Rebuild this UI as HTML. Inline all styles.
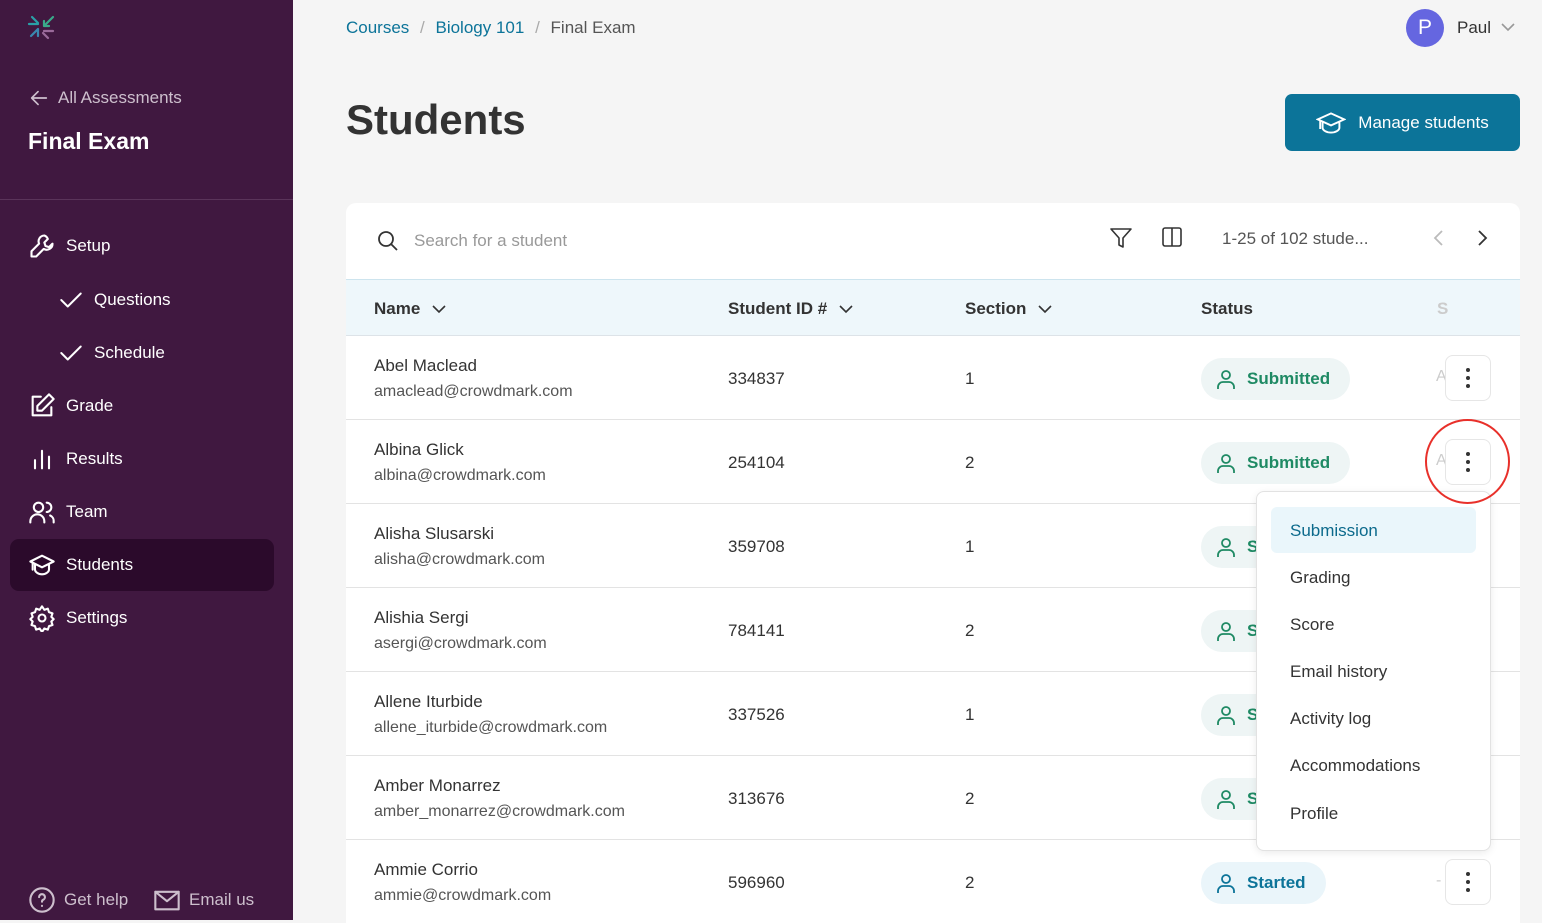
<!DOCTYPE html>
<html><head><meta charset="utf-8"><style>
*{box-sizing:border-box;margin:0;padding:0}
body{width:1542px;height:920px;overflow:hidden;background:#f5f5f5;font-family:"Liberation Sans",sans-serif;position:relative;color:#333}
.sb{position:absolute;left:0;top:0;width:293px;height:920px;background:#401840;color:#fff}
.abs{position:absolute}
.nav{position:absolute;left:28px;font-size:17px;color:#fff;display:flex;align-items:center;gap:10px}
.nav svg{width:28px;height:28px;fill:none;stroke:#fff;stroke-width:1.8;stroke-linecap:round;stroke-linejoin:round}
.card{position:absolute;left:346px;top:203px;width:1174px;height:720px;background:#fff;border-radius:10px 10px 0 0;overflow:hidden}
.hdr{position:absolute;left:0;top:76px;width:100%;height:57px;background:#eef7fb;border-top:1px solid #cde4ee;border-bottom:1px solid #dde3e8;font-weight:bold;font-size:17px;color:#333}
.row{position:absolute;left:0;width:100%;height:84px;border-bottom:1px solid #e3e3e3}
.nm{position:absolute;left:28px;top:20px;font-size:17px;color:#333}
.em{position:absolute;left:28px;top:47px;font-size:16px;color:#555}
.id{position:absolute;left:382px;top:33px;font-size:17px}
.sec{position:absolute;left:619px;top:33px;font-size:17px}
.pill{position:absolute;left:855px;top:22px;height:42px;border-radius:21px;background:#eef5f5;color:#1f8a64;font-weight:bold;font-size:17px;display:flex;align-items:center;padding:0 20px 0 14px;gap:10px}
.pill svg{width:22px;height:22px;fill:none;stroke:#1f8a64;stroke-width:1.8}
.kb{position:absolute;left:1099px;top:19px;width:46px;height:46px;border:1px solid #e6e6e6;border-radius:8px;background:#fff;display:flex;flex-direction:column;align-items:center;justify-content:center;gap:4px}
.kb i{width:4px;height:4px;border-radius:50%;background:#333;display:block}
.menu{position:absolute;left:1256px;top:491px;width:235px;height:360px;background:#fff;border:1px solid #e2e2e2;border-radius:8px;box-shadow:0 2px 8px rgba(0,0,0,.08)}
.mi{position:absolute;left:33px;font-size:17px;color:#333}
</style></head><body>
<div class="sb">
<svg class="abs" style="left:26px;top:12px" width="32" height="32" viewBox="0 0 32 32" fill="none" stroke-width="2.2" stroke-linecap="round"><path d="M18 14l9-9M18 14v-5M18 14h5" stroke="#3aaa8a"/><path d="M3 12h9M6 5l6 6" stroke="#2aa0a8"/><path d="M12 17l-7 7M12 17v7" stroke="#3a88b0"/><path d="M18 19h9M17 21l5 5" stroke="#9a6a9a"/></svg>
<div class="nav" style="top:87px;color:#cdbfcd;gap:8px"><svg viewBox="0 0 24 24" style="width:22px;height:22px;stroke:#cdbfcd"><path d="M20 12H4M11 5l-7 7 7 7"/></svg>All Assessments</div>
<div class="abs" style="left:28px;top:128px;font-size:23px;font-weight:bold">Final Exam</div>
<div class="abs" style="left:0;top:199px;width:293px;height:1px;background:#5a345a"></div>
<div class="nav" style="top:232px"><svg viewBox="0 0 24 24"><path d="M14 3a5 5 0 0 0-4.5 7L3 16.5 3 21h4l6.5-6.5A5 5 0 0 0 21 10l-3 3-3-1-1-3 3-3a5 5 0 0 0-3-3z"/></svg>Setup</div>
<div class="nav" style="top:286px;left:58px"><svg viewBox="0 0 24 24" style="width:26px"><path d="M3 12l6 6L21 6"/></svg>Questions</div>
<div class="nav" style="top:339px;left:58px"><svg viewBox="0 0 24 24" style="width:26px"><path d="M3 12l6 6L21 6"/></svg>Schedule</div>
<div class="nav" style="top:392px"><svg viewBox="0 0 24 24"><path d="M11 4H4v16h16v-7M18 2l4 4-10 10H8v-4z"/></svg>Grade</div>
<div class="nav" style="top:445px"><svg viewBox="0 0 24 24"><path d="M6 20v-7M12 20V5M18 20v-10"/></svg>Results</div>
<div class="nav" style="top:498px"><svg viewBox="0 0 24 24"><circle cx="9" cy="8" r="4"/><path d="M2 21v-1a6 6 0 0 1 12 0v1M16 4a4 4 0 0 1 0 8M19 15a5 5 0 0 1 3 5v1"/></svg>Team</div>
<div class="abs" style="left:10px;top:539px;width:264px;height:52px;background:#2b0a2b;border-radius:9px"></div>
<div class="nav" style="top:551px"><svg viewBox="0 0 24 24"><path d="M2 9l10-5 10 5-10 5zM6 11v5c0 2 3 4 6 4s6-2 6-4v-5M4 10v6"/></svg>Students</div>
<div class="nav" style="top:604px"><svg viewBox="0 0 24 24"><circle cx="12" cy="12" r="3"/><path d="M12 2l2 3 3-1 1 3 3 1-1 3 2 2-2 2 1 3-3 1-1 3-3-1-2 3-2-3-3 1-1-3-3-1 1-3-2-2 2-2-1-3 3-1 1-3 3 1z"/></svg>Settings</div>
<div class="nav" style="top:886px;color:#cdbfcd;gap:8px"><svg viewBox="0 0 24 24" style="stroke:#cdbfcd"><circle cx="12" cy="12" r="10"/><path d="M9.5 9.5a2.5 2.5 0 1 1 3.5 2.3c-.7.3-1 .8-1 1.7M12 17v.1"/></svg>Get help</div>
<div class="nav" style="top:886px;left:153px;color:#cdbfcd;gap:8px"><svg viewBox="0 0 24 24" style="stroke:#cdbfcd"><rect x="2" y="5" width="20" height="15"/><path d="M2 5l10 8 10-8"/></svg>Email us</div>
</div>
<div class="abs" style="left:346px;top:18px;font-size:17px;color:#0c7499">Courses <span style="color:#aaa;margin:0 6px">/</span> Biology 101 <span style="color:#aaa;margin:0 6px">/</span> <span style="color:#555">Final Exam</span></div>
<div class="abs" style="left:1406px;top:9px;width:38px;height:38px;border-radius:50%;background:#6566e0;color:#fff;font-size:21px;text-align:center;line-height:38px">P</div>
<div class="abs" style="left:1457px;top:18px;font-size:17px;color:#333">Paul</div>
<svg class="abs" style="left:1500px;top:22px" width="16" height="10" viewBox="0 0 16 10" fill="none" stroke="#999" stroke-width="1.6"><path d="M2 2l6 6 6-6"/></svg>
<div class="abs" style="left:346px;top:96px;font-size:42px;font-weight:bold;color:#333">Students</div>
<div class="abs" style="left:1285px;top:94px;width:235px;height:57px;background:#0c7499;border-radius:7px;color:#fff;font-size:17px;display:flex;align-items:center;justify-content:center;gap:12px"><svg width="30" height="24" viewBox="0 0 24 20" fill="none" stroke="#fff" stroke-width="1.6"><path d="M1 7l11-5 11 5-11 5zM5 9v5c0 2 3 4 7 4s7-2 7-4V9M3 8v7"/></svg>Manage students</div>
<div class="card">
<svg class="abs" style="left:31px;top:27px" width="22" height="22" viewBox="0 0 22 22" fill="none" stroke="#333" stroke-width="1.8"><circle cx="9" cy="9" r="7"/><path d="M14 14l6 6"/></svg>
<div class="abs" style="left:68px;top:28px;font-size:17px;color:#999">Search for a student</div>
<svg class="abs" style="left:763px;top:24px" width="24" height="22" viewBox="0 0 24 22" fill="none" stroke="#333" stroke-width="1.6" stroke-linejoin="round"><path d="M2 2h20l-8 9v9l-4-2v-7z"/></svg>
<svg class="abs" style="left:815px;top:23px" width="22" height="22" viewBox="0 0 22 22" fill="none" stroke="#333" stroke-width="1.6"><rect x="2" y="2" width="18" height="18" rx="2"/><path d="M11 2v18"/></svg>
<div class="abs" style="left:876px;top:26px;font-size:17px;color:#555">1-25 of 102 stude...</div>
<svg class="abs" style="left:1086px;top:25px" width="14" height="20" viewBox="0 0 14 20" fill="none" stroke="#bbb" stroke-width="1.8"><path d="M10 3l-7 7 7 7"/></svg>
<svg class="abs" style="left:1129px;top:25px" width="14" height="20" viewBox="0 0 14 20" fill="none" stroke="#333" stroke-width="1.8"><path d="M4 3l7 7-7 7"/></svg>
<div class="hdr">
<div class="abs" style="left:28px;top:19px">Name <svg width="16" height="10" viewBox="0 0 16 10" fill="none" stroke="#333" stroke-width="1.6" style="margin-left:6px"><path d="M2 2l6 6 6-6"/></svg></div>
<div class="abs" style="left:382px;top:19px">Student ID # <svg width="16" height="10" viewBox="0 0 16 10" fill="none" stroke="#333" stroke-width="1.6" style="margin-left:6px"><path d="M2 2l6 6 6-6"/></svg></div>
<div class="abs" style="left:619px;top:19px">Section <svg width="16" height="10" viewBox="0 0 16 10" fill="none" stroke="#333" stroke-width="1.6" style="margin-left:6px"><path d="M2 2l6 6 6-6"/></svg></div>
<div class="abs" style="left:855px;top:19px">Status</div>
<div class="abs" style="left:1091px;top:19px;color:#ccc">S</div>
</div>
<div class="row" style="top:133px"><div class="nm">Abel Maclead</div><div class="em">amaclead@crowdmark.com</div><div class="id">334837</div><div class="sec">1</div><div class="pill"><svg viewBox="0 0 22 22"><circle cx="11" cy="7" r="4"/><path d="M3 21v-2a5 5 0 0 1 5-5h6a5 5 0 0 1 5 5v2"/></svg>Submitted</div><div class="abs" style="left:1090px;top:32px;color:#ccc">A</div><div class="kb"><i></i><i></i><i></i></div></div>
<div class="row" style="top:217px"><div class="nm">Albina Glick</div><div class="em">albina@crowdmark.com</div><div class="id">254104</div><div class="sec">2</div><div class="pill"><svg viewBox="0 0 22 22"><circle cx="11" cy="7" r="4"/><path d="M3 21v-2a5 5 0 0 1 5-5h6a5 5 0 0 1 5 5v2"/></svg>Submitted</div><div class="abs" style="left:1090px;top:32px;color:#ccc">A</div><div class="kb"><i></i><i></i><i></i></div></div>
<div class="row" style="top:301px"><div class="nm">Alisha Slusarski</div><div class="em">alisha@crowdmark.com</div><div class="id">359708</div><div class="sec">1</div><div class="pill"><svg viewBox="0 0 22 22"><circle cx="11" cy="7" r="4"/><path d="M3 21v-2a5 5 0 0 1 5-5h6a5 5 0 0 1 5 5v2"/></svg>Submitted</div></div>
<div class="row" style="top:385px"><div class="nm">Alishia Sergi</div><div class="em">asergi@crowdmark.com</div><div class="id">784141</div><div class="sec">2</div><div class="pill"><svg viewBox="0 0 22 22"><circle cx="11" cy="7" r="4"/><path d="M3 21v-2a5 5 0 0 1 5-5h6a5 5 0 0 1 5 5v2"/></svg>Submitted</div></div>
<div class="row" style="top:469px"><div class="nm">Allene Iturbide</div><div class="em">allene_iturbide@crowdmark.com</div><div class="id">337526</div><div class="sec">1</div><div class="pill"><svg viewBox="0 0 22 22"><circle cx="11" cy="7" r="4"/><path d="M3 21v-2a5 5 0 0 1 5-5h6a5 5 0 0 1 5 5v2"/></svg>Submitted</div></div>
<div class="row" style="top:553px"><div class="nm">Amber Monarrez</div><div class="em">amber_monarrez@crowdmark.com</div><div class="id">313676</div><div class="sec">2</div><div class="pill"><svg viewBox="0 0 22 22"><circle cx="11" cy="7" r="4"/><path d="M3 21v-2a5 5 0 0 1 5-5h6a5 5 0 0 1 5 5v2"/></svg>Submitted</div></div>
<div class="row" style="top:637px"><div class="nm">Ammie Corrio</div><div class="em">ammie@crowdmark.com</div><div class="id">596960</div><div class="sec">2</div><div class="pill" style="background:#eaf5fa;color:#0c7499"><svg viewBox="0 0 22 22" style="stroke:#0c7499"><circle cx="11" cy="7" r="4"/><path d="M3 21v-2a5 5 0 0 1 5-5h6a5 5 0 0 1 5 5v2"/></svg>Started</div><div class="abs" style="left:1090px;top:32px;color:#ccc">-</div><div class="kb"><i></i><i></i><i></i></div></div>
</div>
<div class="menu">
<div class="abs" style="left:14px;top:15px;width:205px;height:46px;background:#eaf6fb;border-radius:6px"></div>
<div class="mi" style="top:29px;color:#0c6a8c">Submission</div>
<div class="mi" style="top:76px">Grading</div>
<div class="mi" style="top:123px">Score</div>
<div class="mi" style="top:170px">Email history</div>
<div class="mi" style="top:217px">Activity log</div>
<div class="mi" style="top:264px">Accommodations</div>
<div class="mi" style="top:312px">Profile</div>
</div>
<div class="abs" style="left:1425px;top:419px;width:85px;height:85px;border:2px solid #e8302a;border-radius:50%"></div>
</body></html>
